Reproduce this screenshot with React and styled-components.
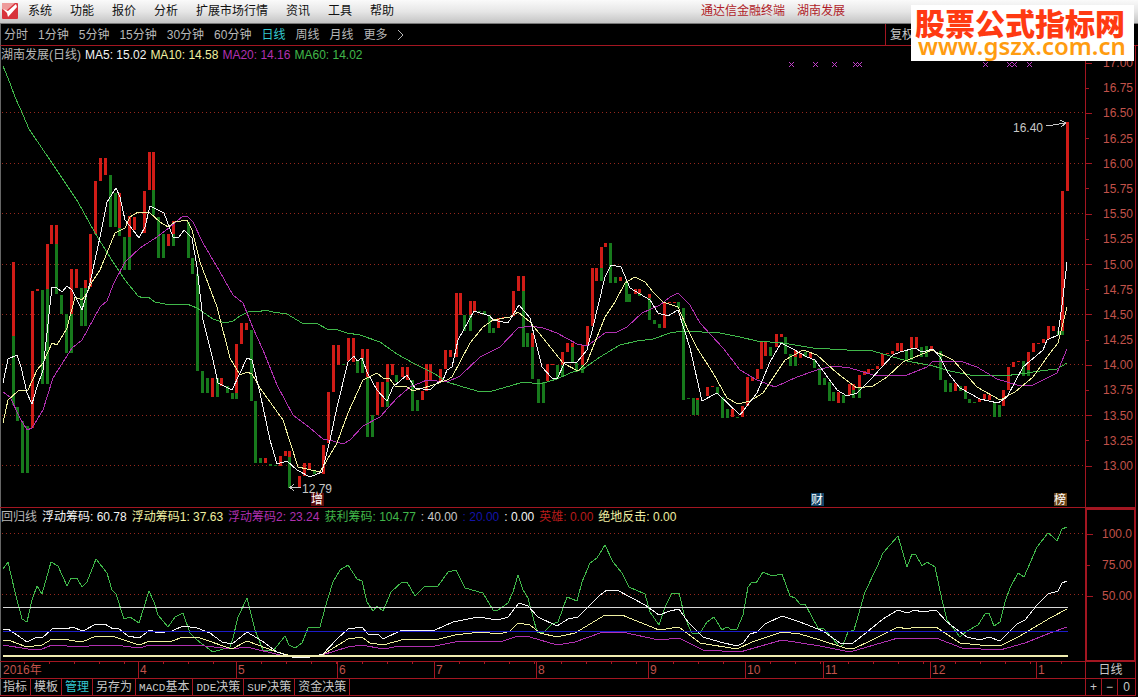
import React from 'react'
import styled, { createGlobalStyle } from 'styled-components'

const RED = '#a31621'
const UP = '#d01c17'
const DOWN = '#177a1c'
const WHITE = '#f4f4f4'
const YELLOW = '#f0f0a0'
const MAGENTA = '#b030b0'
const GREEN = '#40b84a'

const GlobalStyle = createGlobalStyle`
  body {
    margin: 0;
    background: #000;
    color: #c8c8c8;
    font: 12px/16px 'Liberation Sans', 'Noto Sans CJK SC', sans-serif;
  }
  button {
    padding: 0;
    border: 0;
    background: none;
    color: inherit;
    font: inherit;
    white-space: nowrap;
    cursor: pointer;
  }
`

const Page = styled.div`
  position: relative;
  box-sizing: border-box;
  min-height: 100vh;
  overflow: hidden;
`

const MenuBar = styled.header`
  display: flex;
  align-items: center;
  box-sizing: border-box;
  height: 24px;
  padding: 0 0 2px 2px;
  border-bottom: 1px solid #777;
  background: linear-gradient(#fafafa, #e6e6e6 50%, #c4c4c4);
  color: #111;
`

const Menu = styled.nav`
  display: flex;
  flex: 1;
  gap: 18px;
  padding-left: 10px;
`

const Title = styled.div`
  display: flex;
  gap: 12px;
  width: 437px;
  color: #b01c28;
`

const Toolbar = styled.div`
  display: flex;
  height: 21px;
  border-bottom: 1px solid ${RED};
  border-left: 1px solid #666;
`

const Periods = styled.nav`
  display: flex;
  flex: 1;
  align-items: center;
  gap: 10px;
  padding-left: 3px;
`

const Period = styled.button`
  color: ${props => props.$active ? '#35c8d0' : '#b8b8b8'};
`

const Tools = styled.div`
  display: flex;
  align-items: center;
  width: 248px;
  padding-left: 4px;
  border-left: 1px solid ${RED};
`

const Watermark = styled.div`
  position: absolute;
  top: 5px;
  right: 4px;
  box-sizing: border-box;
  width: 223px;
  height: 56px;
  padding-left: 4px;
  background: #fff;
  white-space: nowrap;
`

const SiteName = styled.div`
  color: #ff3a12;
  font: 900 30px/34px 'Noto Sans CJK SC', sans-serif;
`

const SiteLink = styled.a`
  display: block;
  padding-left: 3px;
  color: #ff9c10;
  font: 600 24px/14px 'Noto Sans', sans-serif;
  text-decoration: none;
`

const Row = styled.section`
  display: grid;
  grid-template-columns: minmax(0, 1fr) 51px;
  padding-right: 2px;
`

const Panel = styled.div`
  border-bottom: 1px solid ${RED};
  box-shadow: inset 1px 0 #666;
`

const Legend = styled.div`
  display: flex;
  gap: ${props => props.$tight ? '4px' : '5px'};
  height: 16px;
  padding: 1px 0 0 1px;
  margin-bottom: -1px;
  white-space: nowrap;
`

const LegendItem = styled.span`
  color: ${props => props.$color};
`

const Plot = styled.svg`
  display: block;
  width: 100%;
  height: auto;
  shape-rendering: crispEdges;
`

const PriceAxis = styled.ol`
  display: flex;
  flex-direction: column;
  justify-content: space-between;
  margin: 0;
  padding: 9px 0 33px;
  border: solid ${RED};
  border-width: 0 1px 1px;
  list-style: none;
`

const RatioAxis = styled(PriceAxis)`
  justify-content: flex-start;
  gap: 15px;
  padding: 16px 0 0;
  border-width: 2px;
`

const AxisLabel = styled.li`
  display: flex;
  align-items: center;
  justify-content: space-between;
  padding-right: 2px;
  color: #c2524a;

  &::before {
    content: '';
    width: ${props => props.$minor ? '3px' : '6px'};
    height: 1px;
    background: ${RED};
  }
`

const Months = styled.div`
  display: grid;
  grid-template-columns: 138fr 98fr 101fr 97fr 102fr 112fr 97fr 78fr 107fr 106fr 49fr;
  height: 16px;
  border-bottom: 1px solid ${RED};
  box-shadow: inset 1px 0 #666;
`

const Month = styled.div`
  min-width: 0;
  padding-left: ${props => props.$first ? '3px' : '1px'};
  border-left: ${props => props.$first ? '0' : `1px solid ${RED}`};
  background: repeating-linear-gradient(90deg, transparent 0 24px, ${RED} 24px 25px) 0 0 / 100% 2px no-repeat;
  color: #c2524a;
`

const CornerLabel = styled.div`
  border: solid ${RED};
  border-width: 0 1px 1px;
  text-align: center;
`

const Tabs = styled.nav`
  display: flex;
  height: 16px;
  border-bottom: 1px solid ${RED};
  box-shadow: inset 1px 0 #666;
`

const Tab = styled.button`
  padding: 0 3px;
  border-right: 1px solid ${RED};
  color: ${props => props.$active ? '#35c8d0' : '#c8c8c8'};
`

const Code = styled.span`
  font: 11px/16px 'Liberation Mono', monospace;
`

const Zoom = styled.div`
  display: grid;
  grid-template-columns: 16px 16px 1fr;
  border: solid ${RED};
  border-width: 0 1px 1px;
`

const ZoomButton = styled.button`
  border-right: ${props => props.$last ? '0' : `1px solid ${RED}`};
`

const menu = ['系统', '功能', '报价', '分析', '扩展市场行情', '资讯', '工具', '帮助']
const periods = ['分时', '1分钟', '5分钟', '15分钟', '30分钟', '60分钟', '日线', '周线', '月线', '更多']
const months = ['2016年', '4', '5', '6', '7', '8', '9', '10', '11', '12', '1']
const tabs = [
  ['', '指标'], ['', '模板'], ['', '管理'], ['', '另存为'],
  ['MACD', '基本'], ['DDE', '决策'], ['SUP', '决策'], ['', '资金决策']
]
const prices = Array.from({ length: 17 }, (_, i) => (17 - i * 0.25).toFixed(2))

const priceLegend = [
  ['湖南发展(日线)', '#b8b8b8'],
  ['MA5: 15.02', WHITE],
  ['MA10: 14.58', YELLOW],
  ['MA20: 14.16', MAGENTA],
  ['MA60: 14.02', GREEN]
]

const ratioLegend = [
  ['回归线', '#b8b8b8'],
  ['浮动筹码: 60.78', WHITE],
  ['浮动筹码1: 37.63', YELLOW],
  ['浮动筹码2: 23.24', MAGENTA],
  ['获利筹码: 104.77', GREEN],
  [': 40.00', '#c8c8c8'],
  [': 20.00', '#1414a8'],
  [': 0.00', WHITE],
  ['英雄: 0.00', '#b81c1c'],
  ['绝地反击: 0.00', YELLOW]
]

// centre x, top, bottom
const upBars = `13,262,336 32,291,428 37,289,291 47,244,289 51,225,244 56,225,244 71,269,314 76,269,288 85,280,288
90,234,287 95,181,234 100,158,181 105,158,175 119,193,228 129,216,237 134,217,230 144,191,233 149,152,190 153,152,190
168,234,246 173,221,234 212,378,397 221,378,386 236,344,393 241,323,344 246,323,330 265,458,463 280,456,466 285,451,456
289,451,457 299,476,487 304,463,476 309,463,470 323,445,474 328,392,443 333,345,392 338,345,365 348,338,361 353,338,362
362,349,358 367,349,377 377,382,415 382,382,407 387,364,382 392,364,375 402,367,377 407,367,380 422,391,400 426,364,391
430,364,381 440,369,381 445,350,369 450,350,357 456,293,357 460,293,315 470,301,315 474,301,312 498,318,328 503,317,318
508,317,318 513,291,316 518,276,291 523,276,291 532,333,347 547,364,381 552,364,365 562,352,365 567,343,352 572,343,347
582,345,365 587,326,345 592,268,326 596,268,281 601,247,268 605,243,247 620,277,281 635,289,294 639,289,293 649,294,298
664,303,328 669,302,303 674,302,303 697,398,400 707,387,396 712,386,387 732,409,417 742,406,417 747,377,406 752,377,381
757,369,379 761,342,369 765,342,356 776,334,347 781,334,337 795,350,357 800,353,358 810,353,358 838,392,403 849,384,395
853,384,390 859,375,387 864,371,375 868,369,373 872,369,370 877,366,369 882,354,366 887,353,354 892,351,354 897,343,351
901,343,351 911,337,348 916,337,348 931,346,350 955,383,391 965,386,391 979,399,402 984,394,399 989,395,400 1003,390,406
1008,367,390 1013,362,367 1018,361,362 1028,352,370 1033,343,352 1038,343,344 1043,339,343 1048,326,339 1053,326,331
1062,191,331 1067,122,191`

const downBars = `13,336,405 17,407,421 22,421,473 27,426,473 42,290,384 47,289,384 56,244,294 61,295,314 66,314,353
71,314,353 81,288,326 85,288,326 110,175,227 115,193,227 119,228,236 124,237,270 129,237,270 153,190,215 158,217,258
163,234,258 173,234,246 188,222,258 192,258,274 197,274,371 202,371,393 207,378,393 217,378,397 227,386,393 232,393,399
236,393,399 251,330,401 255,401,463 260,458,463 270,464,466 275,465,466 289,457,488 314,470,474 343,364,365 357,361,373
362,358,373 367,377,437 372,415,437 387,382,407 396,375,382 412,380,411 417,400,411 464,315,331 470,315,331 479,311,312
484,311,315 489,315,333 493,328,333 523,291,347 527,333,347 532,347,379 538,379,403 543,382,403 557,365,379 562,365,377
572,347,363 576,363,372 582,365,373 601,268,281 610,243,283 615,277,283 626,281,302 629,294,302 639,293,296 649,298,320
654,320,324 659,324,328 678,302,308 683,308,400 688,398,399 693,398,415 697,400,415 717,387,394 722,397,418 727,409,418
737,417,418 770,347,356 785,337,354 790,354,366 795,357,366 805,352,357 814,360,368 819,368,385 824,378,385 829,382,401
833,392,401 843,395,403 853,390,398 859,387,398 906,351,360 911,348,360 921,347,357 926,346,357 940,351,380 945,380,392
950,383,392 960,386,391 965,391,399 969,399,403 974,402,403 994,402,417 999,405,417 1023,361,376 1028,370,376
1058,331,335 1062,331,335`

const ma60 = `3,66 10,83 15,97 20,108 29,129 52,163 78,202 95,233 113,262 125,280 138,296 143,298 148,297 155,302 165,304
187,304 197,308 213,319 225,323 233,321 240,316 250,311 258,312 265,310 273,312 287,314 302,323 318,324 327,329 335,329
347,333 360,335 380,342 397,354 413,363 435,374 447,382 460,386 477,391 492,391 510,386 523,382 540,384 557,379 570,373
583,369 600,357 620,345 637,341 653,339 670,333 683,331 720,333 740,337 757,341 783,343 813,348 847,350 873,351 890,356
907,361 933,366 950,371 970,375 1003,376 1020,374 1040,371 1057,369 1067,363`

const ma20 = `3,392 10,397 20,418 27,430 32,428 43,410 53,378 72,348 82,340 100,307 107,301 113,285 125,262 140,248
157,237 170,227 183,216 188,217 193,222 203,243 220,272 233,295 243,303 253,328 263,350 277,385 293,415 310,428 323,439
333,441 343,444 350,440 363,426 380,417 397,398 410,387 427,380 447,382 460,376 480,357 500,347 518,328 530,326 543,328
557,333 577,344 587,346 605,333 617,332 627,327 642,313 660,305 670,297 678,293 690,305 700,323 723,348 740,370 757,380
775,387 797,377 817,370 833,366 850,368 873,375 907,375 927,367 933,361 960,361 977,367 997,379 1017,385 1033,385
1057,373 1067,349`

const ma10 = `3,423 8,400 18,391 28,390 37,370 43,363 52,343 57,345 67,328 75,297 82,300 87,293 92,282 100,270 115,233
125,228 130,217 138,212 150,213 160,222 168,227 175,222 187,220 192,230 200,262 217,307 230,358 240,375 247,372 252,374
260,388 283,420 298,467 320,472 337,443 348,413 363,380 377,373 383,378 390,379 395,386 407,387 413,391 430,386 447,380
452,377 460,362 470,343 483,327 493,320 510,317 518,312 530,322 543,338 563,363 578,371 587,362 605,317 615,302 625,283
635,277 645,282 653,292 663,302 678,307 688,330 697,348 713,373 727,398 738,404 750,401 763,393 785,360 803,350 817,355
837,373 857,388 873,386 887,377 903,362 932,350 953,360 977,387 1000,400 1015,392 1033,377 1050,353 1058,343 1063,323
1067,307`

const ma5 = `3,383 8,359 17,355 21,367 27,393 32,404 37,387 43,370 52,287 57,288 62,292 67,286 72,290 82,310 90,283
100,237 107,202 116,188 120,197 125,220 133,230 139,238 145,227 150,206 158,210 164,213 173,237 179,237 184,230 192,238
197,267 203,320 213,360 218,383 232,390 247,358 252,360 260,393 270,440 277,464 287,461 297,470 310,477 322,472 330,440
337,407 348,362 354,356 357,361 362,358 367,372 377,390 387,401 393,387 407,375 415,388 430,390 437,383 443,380 447,370
452,367 458,340 474,311 490,316 493,320 508,323 519,305 530,318 537,347 542,367 552,378 557,379 565,362 577,362 587,350
593,327 605,277 611,265 621,267 630,288 650,300 658,313 668,316 678,310 690,348 702,401 717,393 740,415 757,393 770,362
781,343 793,349 807,357 815,360 837,390 847,396 857,393 870,380 893,355 900,352 915,348 922,352 933,349 940,357 948,373
960,388 980,399 998,403 1007,397 1023,367 1043,350 1047,340 1058,335 1063,297 1067,262`

const profit = `3,569 8,562 15,592 22,619 27,622 32,600 37,586 42,594 51,562 58,566 67,586 71,578 77,578 82,587 87,582
96,559 107,573 112,590 116,594 124,619 130,617 139,623 144,607 149,591 154,602 158,615 168,627 175,617 183,613 190,633
197,640 213,652 230,647 233,638 238,617 247,598 255,630 263,650 273,651 285,636 289,645 295,648 302,643 308,628 320,627
325,608 333,582 340,570 348,565 357,579 362,581 367,602 373,611 377,606 383,611 391,592 402,582 407,582 415,596 425,586
438,586 448,572 456,570 465,588 483,593 493,610 498,610 508,603 513,592 518,575 523,590 528,598 537,632 543,633 552,624
558,622 567,597 577,601 582,582 590,563 597,558 605,545 613,562 622,573 629,587 645,594 650,612 659,625 665,607 672,593
679,593 685,618 692,633 700,633 707,622 714,617 722,630 727,627 732,630 737,629 743,615 748,587 752,582 756,583 763,572
772,576 782,574 790,596 795,598 800,604 805,604 818,628 824,629 840,647 843,645 848,632 854,630 865,592 877,567 883,553
898,536 907,567 912,554 916,555 922,566 927,562 935,567 942,600 947,620 960,637 967,631 978,625 985,614 989,613 994,626
1000,622 1005,602 1010,588 1018,573 1024,577 1037,547 1048,533 1052,536 1057,541 1062,529 1067,527`

const float0 = `3,630 8,629 17,635 27,642 37,637 42,638 52,629 62,628 67,629 72,627 83,631 96,624 105,624 113,629 118,628
128,636 139,638 150,630 158,633 172,631 183,626 197,628 210,633 222,642 232,644 247,632 262,641 277,652 295,658 310,657
323,654 337,639 348,629 362,627 368,634 379,635 383,639 402,630 408,631 435,630 453,622 478,617 498,620 508,617 519,603
528,606 538,617 557,626 568,619 578,617 600,595 607,590 617,590 645,605 659,615 670,611 679,609 688,622 703,637 720,642
737,646 743,643 750,634 757,632 765,624 782,616 800,622 823,631 840,643 853,643 867,632 883,619 898,610 907,613 915,610
922,612 936,610 947,622 967,637 980,640 989,637 1000,641 1017,624 1025,620 1037,605 1048,594 1058,591 1062,583 1067,581`

const float1 = `3,641 8,640 27,647 42,645 52,639 62,639 82,642 96,636 115,637 139,645 150,641 172,641 183,637 200,638
232,649 247,641 277,652 295,657 322,655 348,639 362,637 370,643 383,645 405,639 435,640 455,635 480,632 500,634 510,631
518,623 530,625 540,633 557,637 575,633 605,615 622,615 659,630 679,627 700,643 737,649 752,642 782,632 800,634 820,640
845,648 855,648 870,641 898,627 907,629 915,627 936,627 960,643 980,645 1000,646 1020,636 1050,618 1067,609`

const float2 = `3,645 28,649 42,649 52,645 82,647 96,645 115,645 139,648 150,645 196,645 232,649 247,647 280,655 322,655
348,647 362,645 383,649 400,646 435,646 455,642 480,641 500,642 518,636 530,637 557,645 575,642 603,632 622,632 659,640
679,638 703,650 740,652 782,640 820,646 850,652 898,638 936,638 962,648 1000,650 1025,643 1050,633 1067,627`

const crosses = [791, 815, 834, 855, 859, 985, 1009, 1014, 1029]

const Logo = () => (
  <svg width="16" height="16" viewBox="0 0 16 16" aria-label="logo">
    <rect width="16" height="16" rx="1" fill="#d8343c" />
    <path d="M0 0H13L4 8L0 6Z" fill="#ee9a9a" />
    <path d="M1 6L6 8L14 1L15 4L6 14L5 10Z" fill="#fff" />
  </svg>
)

const Bars = ({ data, fill }) => data.split(/\s+/).map(item => {
  const [x, top, bottom] = item.split(',').map(Number)
  return <rect key={item} x={x - 1} y={top} width="3" height={bottom - top} fill={fill} />
})

const Line = ({ points, stroke }) => (
  <polyline points={points} fill="none" stroke={stroke} />
)

const GridLine = ({ y }) => (
  <path d={`M2 ${y}.5H1083`} stroke="#96281e" strokeDasharray="1 3" />
)

const Badge = ({ x, fill, children }) => (
  <g>
    <rect x={x} y="493" width="13" height="13" fill={fill} />
    <text x={x} y="504" fill="#fff" fontSize="12">{children}</text>
  </g>
)

const PriceChart = () => (
  <Plot viewBox="0 62 1085 445">
    {[112, 163, 213, 264, 314, 364, 415, 465].map(y => <GridLine key={y} y={y} />)}
    <Bars data={upBars} fill={UP} />
    <Bars data={downBars} fill={DOWN} />
    <Line points={ma60} stroke={GREEN} />
    <Line points={ma20} stroke={MAGENTA} />
    <Line points={ma10} stroke={YELLOW} />
    <Line points={ma5} stroke={WHITE} />
    {crosses.map(x => (
      <path key={x} d={`M${x - 2} 62l5 5m0 -5l-5 5`} stroke="#c040c8" />
    ))}
    <path d="M301 487.5H290M294 484l-4 3.5l4 3.5" fill="none" stroke="#c8c8c8" />
    <text x="302" y="493" fill="#c8c8c8" fontSize="12">12.79</text>
    <path d="M1046 126L1066 123M1060 120l6 3l-5 4" fill="none" stroke="#c8c8c8" />
    <text x="1013" y="132" fill="#c8c8c8" fontSize="12">16.40</text>
    <Badge x={311} fill="#5a0c0c">增</Badge>
    <Badge x={811} fill="#124468">财</Badge>
    <Badge x={1054} fill="#6a4418">榜</Badge>
  </Plot>
)

const RatioChart = () => (
  <Plot viewBox="0 524 1085 137">
    <GridLine y={533} />
    <GridLine y={594} />
    <Line points={profit} stroke={GREEN} />
    <Line points={float2} stroke={MAGENTA} />
    <Line points={float1} stroke={YELLOW} />
    <Line points={float0} stroke={WHITE} />
    <path d="M3 607.5H1068" stroke="#d8d8d8" />
    <rect x="3" y="631" width="1065" height="1" fill="#1c1cc8" />
    <path d="M3 656H1068" stroke="#f0ecb0" strokeWidth="2" />
  </Plot>
)

const App = () => (
  <Page>
    <GlobalStyle />
    <MenuBar>
      <Logo />
      <Menu>
        {menu.map(name => <button key={name}>{name}</button>)}
      </Menu>
      <Title>
        <span>通达信金融终端</span>
        <span>湖南发展</span>
      </Title>
    </MenuBar>
    <Toolbar>
      <Periods>
        {periods.map(name => <Period key={name} $active={name === '日线'}>{name}</Period>)}
        <svg width="6" height="10" viewBox="0 0 6 10" fill="none" stroke="#b8b8b8">
          <path d="M0 0L5 5L0 10" />
        </svg>
      </Periods>
      <Tools>
        <button>复权</button>
      </Tools>
    </Toolbar>
    <Watermark>
      <SiteName>股票公式指标网</SiteName>
      <SiteLink href="#">www.gszx.com.cn</SiteLink>
    </Watermark>
    <Row>
      <Panel>
        <Legend $tight>
          {priceLegend.map(([text, color]) => <LegendItem key={text} $color={color}>{text}</LegendItem>)}
        </Legend>
        <PriceChart />
      </Panel>
      <PriceAxis>
        {prices.map((price, i) => <AxisLabel key={price} $minor={i % 2 === 1}>{price}</AxisLabel>)}
      </PriceAxis>
    </Row>
    <Row>
      <Panel>
        <Legend>
          {ratioLegend.map(([text, color]) => <LegendItem key={text} $color={color}>{text}</LegendItem>)}
        </Legend>
        <RatioChart />
      </Panel>
      <RatioAxis>
        <AxisLabel>100.0</AxisLabel>
        <AxisLabel $minor>75.00</AxisLabel>
        <AxisLabel>50.00</AxisLabel>
      </RatioAxis>
    </Row>
    <Row>
      <Months>
        {months.map((name, i) => <Month key={name} $first={i === 0}>{name}</Month>)}
      </Months>
      <CornerLabel>日线</CornerLabel>
    </Row>
    <Row>
      <Tabs>
        {tabs.map(([code, name]) => (
          <Tab key={code + name} $active={name === '管理'}>
            {code && <Code>{code}</Code>}{name}
          </Tab>
        ))}
      </Tabs>
      <Zoom>
        <ZoomButton>+</ZoomButton>
        <ZoomButton>−</ZoomButton>
        <ZoomButton $last>0</ZoomButton>
      </Zoom>
    </Row>
  </Page>
)

export default App
